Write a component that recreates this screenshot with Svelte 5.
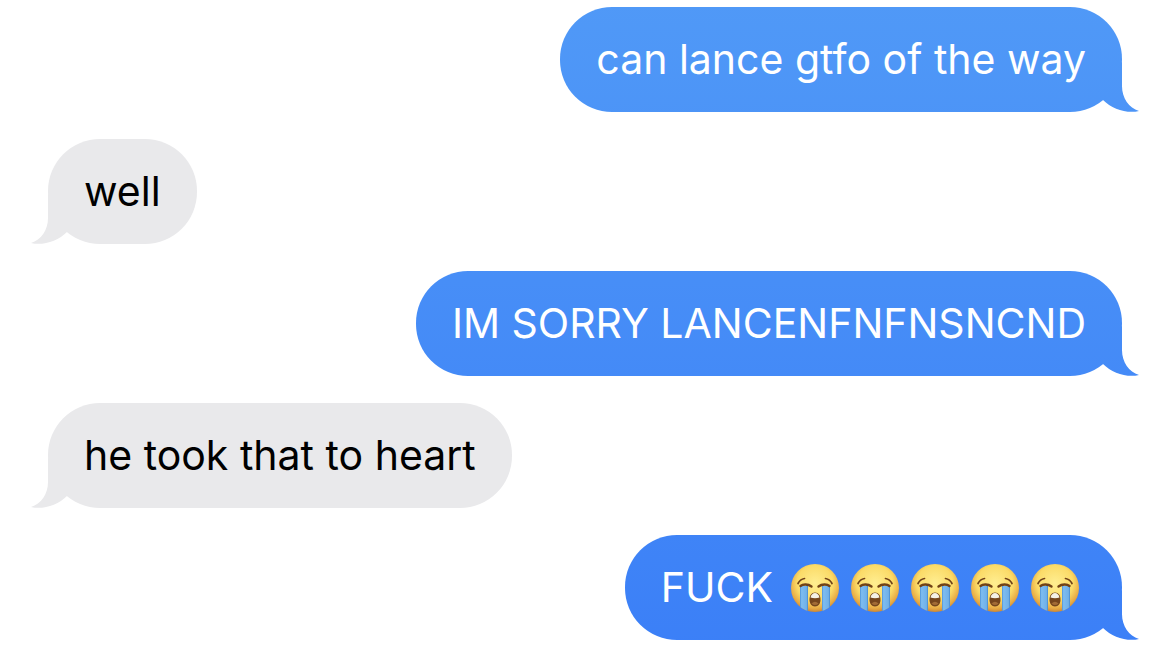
<script lang="ts">
  type Message = {
    id: number;
    sent: boolean;
    text: string;
    sobs?: number;
  };

  const messages: Message[] = [
    { id: 1, sent: true, text: 'can lance gtfo of the way' },
    { id: 2, sent: false, text: 'well' },
    { id: 3, sent: true, text: 'IM SORRY LANCENFNFNSNCND' },
    { id: 4, sent: false, text: 'he took that to heart' },
    { id: 5, sent: true, text: 'FUCK', sobs: 5 }
  ];
</script>

<svg class="defs" aria-hidden="true">
  <defs>
    <radialGradient id="face" cx="0.5" cy="0.4" r="0.62">
      <stop offset="0" stop-color="#ffee91" />
      <stop offset="0.6" stop-color="#fbdb68" />
      <stop offset="0.84" stop-color="#e9ac45" />
      <stop offset="1" stop-color="#c47d31" />
    </radialGradient>
    <linearGradient id="tear" x1="0" x2="1" y1="0" y2="0">
      <stop offset="0" stop-color="#4d91d5" />
      <stop offset="0.2" stop-color="#7dbcf0" />
      <stop offset="0.8" stop-color="#70b1e9" />
      <stop offset="1" stop-color="#4688c9" />
    </linearGradient>
    <clipPath id="face-clip">
      <circle cx="24" cy="24" r="24" />
    </clipPath>
  </defs>
</svg>

<main class="thread">
  {#each messages as message (message.id)}
    <div class="row" class:sent={message.sent}>
      <div class="bubble">
        <span>{message.text}</span>
        {#if message.sobs}
          <span class="emojis">
            {#each { length: message.sobs } as _}
              <svg class="emoji" viewBox="0 0 48 48" role="img" aria-label="loudly crying face">
                <circle cx="24" cy="24" r="24" fill="url(#face)" />
                <g clip-path="url(#face-clip)">
                  <path d="M9 22h8v26H9z" fill="url(#tear)" />
                  <path d="M31 22h8v26h-8z" fill="url(#tear)" />
                </g>
                <g fill="none" stroke="#704218" stroke-linecap="round">
                  <path d="M7 19.5C8.5 16.5 11 15 13.5 14.5M41 19.5C39.5 16.5 37 15 34.5 14.5" stroke-width="1.7" />
                  <path d="M9.5 22C12 20 17 20 20.5 22.5M38.5 22C36 20 31 20 27.5 22.5" stroke-width="2.4" />
                </g>
                <path d="M24 28.5C27.5 28.5 29.5 31.5 29.5 35.5S27.5 42.5 24 42.5S18.5 39.5 18.5 35.5S20.5 28.5 24 28.5Z" fill="#75451d" />
                <path d="M19.5 33.5C20.5 27.5 27.5 27.5 28.5 33.5Q24 35 19.5 33.5Z" fill="#f5f1e7" />
                <path d="M20.5 39.5Q24 36 27.5 39.5Q24 42.5 20.5 39.5Z" fill="#a26b36" />
              </svg>
            {/each}
          </span>
        {/if}
        <i class="tail" aria-hidden="true"></i>
      </div>
    </div>
  {/each}
</main>

<style>
  :global(body) {
    margin: 0;
    background: #fff;
  }

  .defs {
    position: absolute;
    width: 0;
    height: 0;
  }

  .thread {
    display: flex;
    flex-direction: column;
    gap: 27px;
    padding: 7px 47px 18px 48px;
    font-family: Inter, 'Noto Sans', sans-serif;
    font-size: 41px;
    line-height: 53px;
  }

  .row {
    display: flex;
  }

  .row.sent {
    justify-content: flex-end;
  }

  .bubble {
    position: relative;
    display: flex;
    align-items: center;
    padding: 26px 36px;
    border-radius: 52px;
    background: #e9e9eb;
    color: #000;
  }

  .tail {
    position: absolute;
    bottom: 0;
    left: -18px;
    width: 48px;
    height: 50px;
    background: #e9e9eb;
    clip-path: path('M18 0V24C18 36 11 46 1 49C13 52 28 47 37 38L48 20Z');
  }

  /* sent bubbles share one gradient that runs down the window */
  .sent .bubble,
  .sent .tail {
    background: linear-gradient(#5099f7, #3b7ff7) fixed;
    color: #fff;
  }

  .sent .tail {
    right: -18px;
    left: auto;
    clip-path: path('M30 0V24C30 36 37 46 47 49C35 52 20 47 11 38L0 20Z');
  }

  .emojis {
    display: flex;
    gap: 12px;
    padding: 0 7px 0 18px;
  }

  .emoji {
    width: 48px;
    height: 48px;
  }
</style>
